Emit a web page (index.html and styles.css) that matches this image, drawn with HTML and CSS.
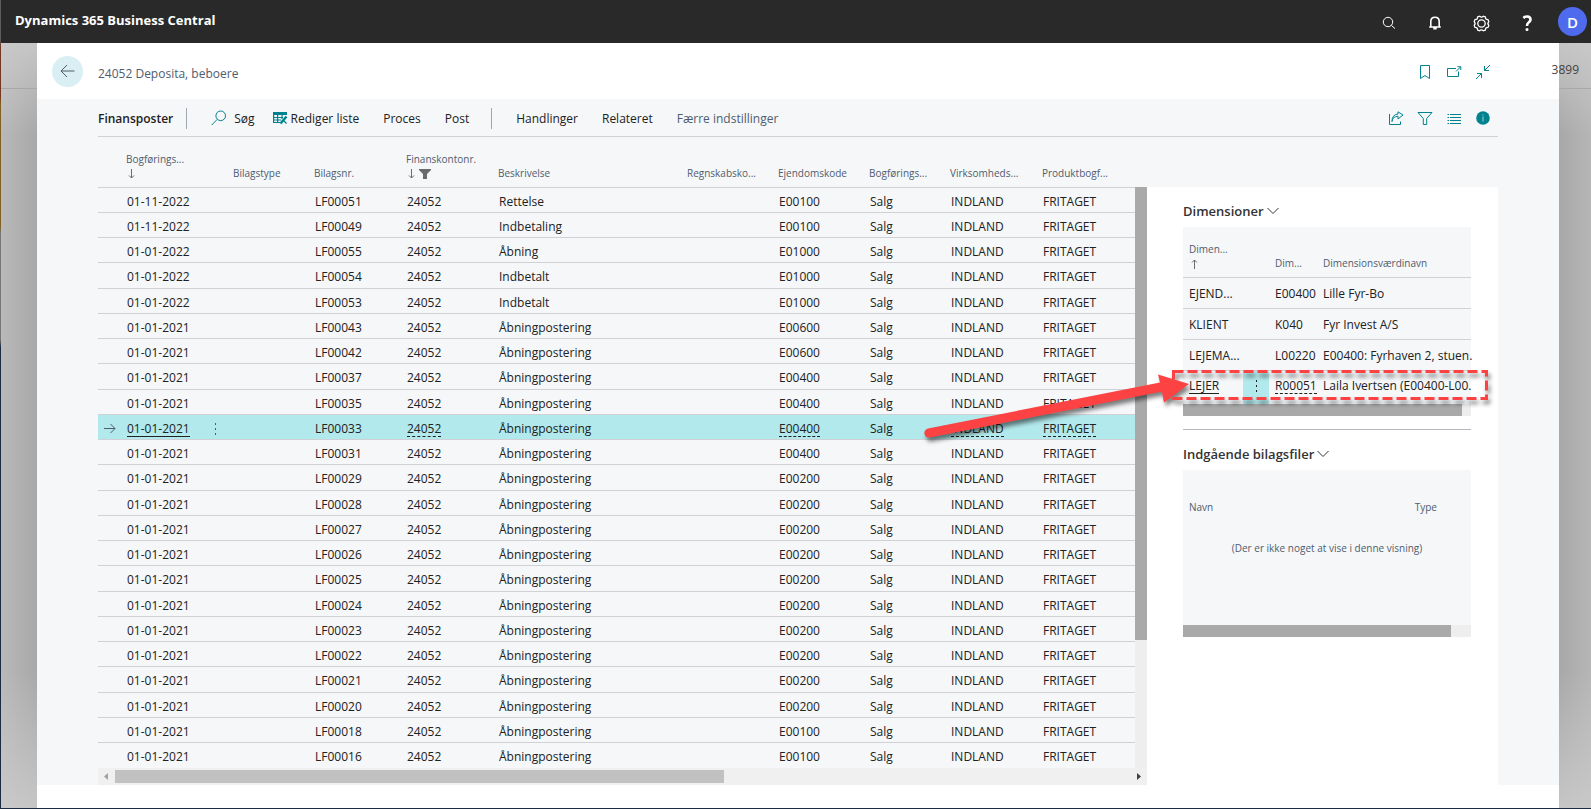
FILE: index.html
```html
<!DOCTYPE html>
<html lang="da">
<head>
<meta charset="utf-8">
<title>Finansposter - Dynamics 365 Business Central</title>
<link rel="stylesheet" href="styles.css">
</head>
<body>
<div class="app">
<header class="topbar">
  <h1 class="brand">Dynamics 365 Business Central</h1>
  <nav class="top-icons">
    <button aria-label="Søg"><svg width="14" height="14" viewBox="0 0 14 14"><circle cx="6" cy="6" r="4.7"/><path d="M9.4 9.4L13 12.6"/></svg></button>
    <button aria-label="Beskeder"><svg width="14" height="14" viewBox="0 0 14 14"><path class="bold" d="M1.2 11H12.8M2.8 10.6V5.5Q2.8 1.2 7 1.2T11.2 5.5V10.6M5.3 12.6H8.7"/></svg></button>
    <button aria-label="Indstillinger"><svg width="17" height="17" viewBox="0 0 17 17"><path class="gear" d="M6.6 1.2Q8.5 3 10.4 1.2L12.4 2Q12.3 4.7 15 4.6L15.8 6.6Q14 8.5 15.8 10.4L15 12.4Q12.3 12.3 12.4 15L10.4 15.8Q8.5 14 6.6 15.8L4.6 15Q4.7 12.3 2 12.4L1.2 10.4Q3 8.5 1.2 6.6L2 4.6Q4.7 4.7 4.6 2z"/><circle class="gear" cx="8.5" cy="8.5" r="3.7"/></svg></button>
    <button aria-label="Hjælp"><svg width="12" height="17" viewBox="0 0 12 17"><path class="heavy" d="M2.4 3Q4 1.4 6.2 1.5 9.6 1.7 9.5 4.6 9.4 6.3 7.6 7.5 6 8.6 6 11"/><circle class="dot" cx="6" cy="14.5" r="1.5"/></svg></button>
  </nav>
  <button class="avatar" aria-label="Konto">D</button>
</header>

<div class="stage">
<main class="page">
  <div class="page-head">
    <button class="back" aria-label="Tilbage"><svg width="15" height="14" viewBox="0 0 15 14"><path d="M7 1L1 7l6 6M1 7H14.5"/></svg></button>
    <h2 class="page-title">24052 Deposita, beboere</h2>
    <div class="icon-row">
      <button aria-label="Bogmærke"><svg width="16" height="16" viewBox="0 0 16 16"><path d="M3.5 1.5H12.5V14.5L8 11.5 3.5 14.5z"/></svg></button>
      <button aria-label="Åbn i nyt vindue"><svg width="16" height="16" viewBox="0 0 16 16"><path d="M10 4.5H1.5V12.5H12.5V7.5M10 7.5L14.5 3M11.5 2.7H14.8V6"/></svg></button>
      <button aria-label="Minimer"><svg width="16" height="16" viewBox="0 0 16 16"><path d="M15 1L9.5 6.5M9.5 2V6.5H14M1 15L6.5 9.5M2 9.5H6.5V14"/></svg></button>
    </div>
  </div>

  <div class="content">
    <div class="actions">
      <h3 class="list-name">Finansposter</h3>
      <span class="rule"></span>
      <button class="act search"><svg width="16" height="16" viewBox="0 0 16 16"><circle cx="9.7" cy="5.8" r="4.8"/><path d="M6.2 9.4L.7 15"/></svg>Søg</button>
      <button class="act edit"><svg width="15" height="14" viewBox="0 0 15 14"><path class="fill" d="M0 1H14V4H0z"/><path class="edge" d="M.6 1V11.5H7M4.6 4V11.5M9 4V8M0 6.5H10M0 9H8"/><path class="pen" d="M13.5 5.5L7.5 12.5"/><path class="edge" d="M10.5 9.5L13.5 12.5"/></svg>Rediger liste</button>
      <button class="act">Proces</button>
      <button class="act">Post</button>
      <span class="rule"></span>
      <button class="act">Handlinger</button>
      <button class="act">Relateret</button>
      <button class="act muted">Færre indstillinger</button>
      <div class="icon-row">
        <button aria-label="Del"><svg width="16" height="16" viewBox="0 0 16 16"><path d="M1.5 4V14.5H12.5V11.5M4 11.5Q4.5 6.5 10 6.2V9L15 5 10 1.8V4Q4 4.5 4 11.5z"/></svg></button>
        <button aria-label="Filter"><svg width="16" height="16" viewBox="0 0 16 16"><path d="M1 2.5H15L9.7 8.5V14.5H6.3V8.5z"/></svg></button>
        <button aria-label="Listevisning"><svg width="16" height="16" viewBox="0 0 16 16"><path d="M4 4.5H15M4 7.5H15M4 10.5H15M4 13.5H15M1.5 4.5H3M1.5 7.5H3M1.5 10.5H3M1.5 13.5H3"/></svg></button>
        <button aria-label="Oplysninger"><svg width="16" height="16" viewBox="0 0 16 16"><circle class="fill" cx="8" cy="8" r="6.8"/><path class="info" d="M8 6.5V11.5M8 4.5V5.5"/></svg></button>
      </div>
    </div>

    <div class="columns">
      <section class="ledger">
        <table class="grid">
          <colgroup><col class="w-mark"><col class="w-81"><col class="w-dots"><col class="w-81"><col class="w-92"><col class="w-92"><col><col class="w-91"><col class="w-91"><col class="w-81"><col class="w-92"><col class="w-last"></colgroup>
          <thead><tr>
            <th></th>
            <th>Bogførings...<span class="sort"><svg width="7" height="10" viewBox="0 0 7 10"><path d="M3.5 0V9M1 6.5L3.5 9 6 6.5"/></svg></span></th>
            <th></th><th>Bilagstype</th><th>Bilagsnr.</th>
            <th>Finanskontonr.<span class="sort"><svg width="7" height="10" viewBox="0 0 7 10"><path d="M3.5 0V9M1 6.5L3.5 9 6 6.5"/></svg><svg width="12" height="10" viewBox="0 0 12 10"><path class="funnel" d="M0 0H12V1L8 5V10H4V5L0 1z"/></svg></span></th>
            <th>Beskrivelse</th><th>Regnskabsko...</th><th>Ejendomskode</th><th>Bogførings...</th><th>Virksomheds...</th><th>Produktbogf...</th>
          </tr></thead>
          <tbody>
          <tr><td><td>01-11-2022<td><td><td>LF00051<td>24052<td>Rettelse<td><td>E00100<td>Salg<td>INDLAND<td>FRITAGET</tr>
          <tr><td><td>01-11-2022<td><td><td>LF00049<td>24052<td>Indbetaling<td><td>E00100<td>Salg<td>INDLAND<td>FRITAGET</tr>
          <tr><td><td>01-01-2022<td><td><td>LF00055<td>24052<td>Åbning<td><td>E01000<td>Salg<td>INDLAND<td>FRITAGET</tr>
          <tr><td><td>01-01-2022<td><td><td>LF00054<td>24052<td>Indbetalt<td><td>E01000<td>Salg<td>INDLAND<td>FRITAGET</tr>
          <tr><td><td>01-01-2022<td><td><td>LF00053<td>24052<td>Indbetalt<td><td>E01000<td>Salg<td>INDLAND<td>FRITAGET</tr>
          <tr><td><td>01-01-2021<td><td><td>LF00043<td>24052<td>Åbningpostering<td><td>E00600<td>Salg<td>INDLAND<td>FRITAGET</tr>
          <tr><td><td>01-01-2021<td><td><td>LF00042<td>24052<td>Åbningpostering<td><td>E00600<td>Salg<td>INDLAND<td>FRITAGET</tr>
          <tr><td><td>01-01-2021<td><td><td>LF00037<td>24052<td>Åbningpostering<td><td>E00400<td>Salg<td>INDLAND<td>FRITAGET</tr>
          <tr><td><td>01-01-2021<td><td><td>LF00035<td>24052<td>Åbningpostering<td><td>E00400<td>Salg<td>INDLAND<td>FRITAGET</tr>
          <tr class="selected"><td><svg width="12" height="11" viewBox="0 0 12 11"><path d="M0 5.5H11M6.5 1L11 5.5 6.5 10"/></svg><td><a class="solid" href="#">01-01-2021</a><td><button class="dots" aria-label="Vis flere indstillinger"><svg width="3" height="14" viewBox="0 0 3 14"><path d="M1.5 1V3M1.5 6V8M1.5 11V13"/></svg></button><td><td>LF00033<td><a href="#">24052</a><td>Åbningpostering<td><td><a href="#">E00400</a><td>Salg<td><a href="#">INDLAND</a><td><a href="#">FRITAGET</a></tr>
          <tr><td><td>01-01-2021<td><td><td>LF00031<td>24052<td>Åbningpostering<td><td>E00400<td>Salg<td>INDLAND<td>FRITAGET</tr>
          <tr><td><td>01-01-2021<td><td><td>LF00029<td>24052<td>Åbningpostering<td><td>E00200<td>Salg<td>INDLAND<td>FRITAGET</tr>
          <tr><td><td>01-01-2021<td><td><td>LF00028<td>24052<td>Åbningpostering<td><td>E00200<td>Salg<td>INDLAND<td>FRITAGET</tr>
          <tr><td><td>01-01-2021<td><td><td>LF00027<td>24052<td>Åbningpostering<td><td>E00200<td>Salg<td>INDLAND<td>FRITAGET</tr>
          <tr><td><td>01-01-2021<td><td><td>LF00026<td>24052<td>Åbningpostering<td><td>E00200<td>Salg<td>INDLAND<td>FRITAGET</tr>
          <tr><td><td>01-01-2021<td><td><td>LF00025<td>24052<td>Åbningpostering<td><td>E00200<td>Salg<td>INDLAND<td>FRITAGET</tr>
          <tr><td><td>01-01-2021<td><td><td>LF00024<td>24052<td>Åbningpostering<td><td>E00200<td>Salg<td>INDLAND<td>FRITAGET</tr>
          <tr><td><td>01-01-2021<td><td><td>LF00023<td>24052<td>Åbningpostering<td><td>E00200<td>Salg<td>INDLAND<td>FRITAGET</tr>
          <tr><td><td>01-01-2021<td><td><td>LF00022<td>24052<td>Åbningpostering<td><td>E00200<td>Salg<td>INDLAND<td>FRITAGET</tr>
          <tr><td><td>01-01-2021<td><td><td>LF00021<td>24052<td>Åbningpostering<td><td>E00200<td>Salg<td>INDLAND<td>FRITAGET</tr>
          <tr><td><td>01-01-2021<td><td><td>LF00020<td>24052<td>Åbningpostering<td><td>E00200<td>Salg<td>INDLAND<td>FRITAGET</tr>
          <tr><td><td>01-01-2021<td><td><td>LF00018<td>24052<td>Åbningpostering<td><td>E00100<td>Salg<td>INDLAND<td>FRITAGET</tr>
          <tr><td><td>01-01-2021<td><td><td>LF00016<td>24052<td>Åbningpostering<td><td>E00100<td>Salg<td>INDLAND<td>FRITAGET</tr>
          </tbody>
        </table>
        <div class="vbar"><div class="vthumb"></div></div>
        <div class="hbar">
          <svg width="17" height="17" viewBox="0 0 17 17"><path class="off" d="M10 5V12L6 8.5z"/></svg>
          <div class="track"><div class="hthumb"></div></div>
          <svg width="17" height="17" viewBox="0 0 17 17"><path d="M7 5V12L11 8.5z"/></svg>
        </div>
      </section>

      <aside class="factbox">
        <section>
          <h4 class="fact-title">Dimensioner<svg width="12" height="8" viewBox="0 0 12 8"><path d="M.5 1L6 6.5 11.5 1"/></svg></h4>
          <div class="fact-body">
            <table class="grid dims">
              <colgroup><col class="w-dim"><col class="w-dots"><col class="w-code"><col></colgroup>
              <thead><tr>
                <th>Dimen...<span class="sort"><svg width="7" height="10" viewBox="0 0 7 10"><path d="M3.5 10V1M1 3.5L3.5 1 6 3.5"/></svg></span></th><th></th><th>Dim...</th><th>Dimensionsværdinavn</th>
              </tr></thead>
              <tbody>
              <tr><td>EJEND...<td><td>E00400<td>Lille Fyr-Bo</tr>
              <tr><td>KLIENT<td><td>K040<td>Fyr Invest A/S</tr>
              <tr><td>LEJEMA...<td><td>L00220<td>E00400: Fyrhaven 2, stuen.</tr>
              <tr><td><a class="solid" href="#">LEJER</a><td class="hot"><button class="dots" aria-label="Vis flere indstillinger"><svg width="3" height="14" viewBox="0 0 3 14"><path d="M1.5 1V3M1.5 6V8M1.5 11V13"/></svg></button><td><a href="#">R00051</a><td>Laila Ivertsen (E00400-L00.</tr>
              </tbody>
            </table>
          </div>
          <div class="fact-scroll"><div class="fact-thumb wide"></div></div>
        </section>
        <section class="files">
          <h4 class="fact-title">Indgående bilagsfiler<svg width="12" height="8" viewBox="0 0 12 8"><path d="M.5 1L6 6.5 11.5 1"/></svg></h4>
          <div class="fact-body empty">
            <div class="file-head"><span>Navn</span><span>Type</span></div>
            <p class="none">(Der er ikke noget at vise i denne visning)</p>
          </div>
          <div class="fact-scroll"><div class="fact-thumb"></div></div>
        </section>
      </aside>
    </div>
  </div>
</main>
</div>
<span class="behind">3899</span>
<svg class="callout" width="580" height="60" viewBox="920 360 580 60" aria-hidden="true">
  <rect x="1173.5" y="371.5" width="313" height="27"/>
  <path d="M928 428.5L1160 382.5 1158 374.5 1189 384 1164 402.5 1162 391.5 930 437.5A4.6 4.6 0 0 1 928 428.5z"/>
</svg>
</div>
</body>
</html>
```
FILE: styles.css
```css
* { box-sizing: border-box; }
body {
  margin: 0;
  font-family: "Open Sans", "Noto Sans", sans-serif;
  font-size: 12px;
  color: #212121;
}
h1, h2, h3, h4, p { margin: 0; }
button {
  margin: 0;
  padding: 0;
  border: 0;
  background: none;
  font: inherit;
  color: inherit;
  display: flex;
  align-items: center;
  justify-content: center;
}
svg { display: block; fill: none; stroke: currentColor; flex: none; }

.app {
  position: relative;
  min-height: 100vh;
  display: flex;
  flex-direction: column;
  border-left: 1px solid #1c2638;
  border-bottom: 1px solid #1c2c48;
  border-image: linear-gradient(#5c5c5c 5%, #74371f 6% 12%, #806024 13% 28%, #777 29% 42%, #1c2b42 43%) 1;
  border-top: 0;
  border-right: 0;
}
.topbar {
  height: 43px;
  background: #292929;
  color: #fff;
  display: flex;
  align-items: center;
  padding: 0 4px 0 14px;
}
.brand { flex: 1; font-size: 13px; font-weight: 700; line-height: 18px; margin-bottom: 4px; }
.top-icons { display: flex; gap: 22px; margin-right: 19px; padding-top: 3px; }
.top-icons button { width: 24px; height: 24px; }
.top-icons .bold { stroke-width: 1.6; }
.top-icons .gear { stroke-width: 1.3; }
.top-icons .heavy { stroke-width: 2.6; }
.top-icons .dot { fill: #fff; stroke: none; }
.avatar { width: 29px; height: 29px; border-radius: 50%; background: #4f6bed; font-size: 15px; font-weight: 600; }

.stage {
  flex: 1;
  display: flex;
  padding: 0 32px 0 36px;
  background:
    linear-gradient(#a8a8a8, #a8a8a8) 0 45px / 100% 1px no-repeat,
    linear-gradient(rgba(205,205,205,.8), rgba(205,205,205,0) 12%, rgba(205,205,205,0) 82%, rgba(205,205,205,.8)),
    linear-gradient(90deg, #b8b9b8, #a7a8a7 36px, #a7a8a7 calc(100% - 32px), #b5b6b5);
}
.page { flex: 1; min-width: 0; background: #fff; padding-bottom: 23px; }
.page-head { height: 56px; display: flex; align-items: center; padding: 0 61px 0 15px; }
.back { width: 31px; height: 31px; border-radius: 50%; background: #d9eff3; color: #505c6d; }
.page-title { flex: 1; margin-left: 15px; padding-top: 4px; font-size: 12px; font-weight: 400; color: #505c6d; }
.icon-row { display: flex; gap: 5px; color: #00838f; }
.icon-row button { width: 24px; height: 24px; }
.page-head .icon-row { padding-top: 2px; margin-right: 3px; }
.icon-row .fill { fill: #00838f; stroke: none; }
.icon-row .info { stroke: #9bd3d8; }

.content { background: #f5f7f9; padding: 0 61px; }
.actions {
  height: 38px;
  display: flex;
  align-items: center;
  padding-top: 1px;
  border-bottom: 1px solid #cfd1d6;
  font-size: 12px;
}
.list-name { font-size: 12px; font-weight: 600; margin-right: 13px; }
.rule { width: 1px; height: 21px; background: #9fa6b2; }
.act { margin-left: 24px; }
.act svg { color: #00838f; }
.act.search svg { margin-right: 7px; }
.act.edit { margin-left: 18px; }
.act.edit svg { margin-right: 3px; }
.act .fill { fill: #00838f; stroke: none; }
.act .edge { stroke-width: 1.2; }
.act .pen { stroke-width: 2.4; }
.muted { color: #505c6d; }
.actions .act + .rule { margin-left: 22px; }
.actions .icon-row { margin-left: auto; margin-right: 3px; }

.columns { display: grid; grid-template-columns: minmax(0, 3fr) 351px; }
.ledger { display: grid; grid-template-columns: minmax(0, 1fr) 12px; }
.grid { width: 100%; table-layout: fixed; border-collapse: separate; border-spacing: 0; }
.w-mark { width: 23px; }
.w-dots { width: 26px; }
.w-81 { width: 81px; }
.w-91 { width: 91px; }
.w-92 { width: 92px; }
.w-last { width: 98px; }
.w-dim { width: 60px; }
.w-code { width: 48px; }
th {
  height: 51px;
  padding: 0 0 6px 5px;
  vertical-align: bottom;
  text-align: left;
  font-size: 10px;
  line-height: 16px;
  font-weight: 400;
  color: #505c6d;
  white-space: nowrap;
  border-bottom: 1px solid #cfd1d6;
}
td {
  height: 25px;
  padding: 3px 0 0 6px;
  line-height: 18px;
  white-space: nowrap;
  border-bottom: 1px solid #cfd1d6;
}
.ledger tr:nth-child(4n) td { height: 26px; }
.ledger tr:last-child td { border-bottom: 0; }
.sort { display: flex; align-items: center; gap: 4px; height: 14px; padding-left: 2px; color: #6b6b6b; }
.funnel { fill: #6b6b6b; stroke: none; }
.selected td { background: #b2e9ec; }
.selected svg { color: #505c6d; }
td a { display: inline-block; line-height: 15px; color: inherit; text-decoration: none; border-bottom: 1px dashed #212121; }
td a.solid { border-bottom-style: solid; }
.dots { width: 14px; height: 18px; }

.vbar { margin-top: 50px; background: #eee; }
.vthumb { height: 78%; background: #a9a9a9; }
.hbar { grid-column: 1 / 3; display: flex; height: 17px; background: #f0f0f0; }
.hbar svg { fill: #404040; stroke: none; }
.hbar .off { fill: #a0a0a0; }
.track { flex: 1; padding: 2px 0; }
.hthumb { width: 60%; height: 13px; background: #c1c1c1; }

.factbox { margin-top: 50px; padding: 12px 27px 0 36px; background: #fff; }
.fact-title { display: flex; align-items: center; gap: 3px; height: 24px; margin-bottom: 4px; font-size: 13px; font-weight: 600; color: #333; }
.fact-body { background: #f5f7f9; }
.dims th, .dims td { padding-left: 6px; }
.dims td { height: 31px; padding-top: 1px; }
.dims tr:last-child td { height: 33px; padding-bottom: 5px; border-bottom: 0; }
.dims .hot { background: #b2e9ec; }
.fact-scroll { height: 12px; background: #eee; }
.fact-thumb { width: 93%; height: 12px; background: #a9a9a9; }
.fact-thumb.wide { width: 97%; }
.files { margin-top: 13px; padding-top: 12px; border-top: 1px solid #b5b8bf; }
.empty { height: 155px; padding: 28px 6px 0; }
.file-head { display: flex; justify-content: space-between; padding-right: 28px; font-size: 10px; line-height: 18px; color: #505c6d; }
.none { margin-top: 23px; text-align: center; font-size: 10px; line-height: 18px; color: #505c6d; }

.behind { position: absolute; top: 61px; right: 12px; font-size: 12px; line-height: 18px; color: #444; }
.callout { position: absolute; top: 360px; right: 91px; pointer-events: none; filter: drop-shadow(2px 4px 2px rgba(0,0,0,.5)); overflow: visible; }
.callout rect { stroke: #fc4242; stroke-width: 3; stroke-dasharray: 10 4; }
.callout path { fill: #fc4242; stroke: none; }
```
